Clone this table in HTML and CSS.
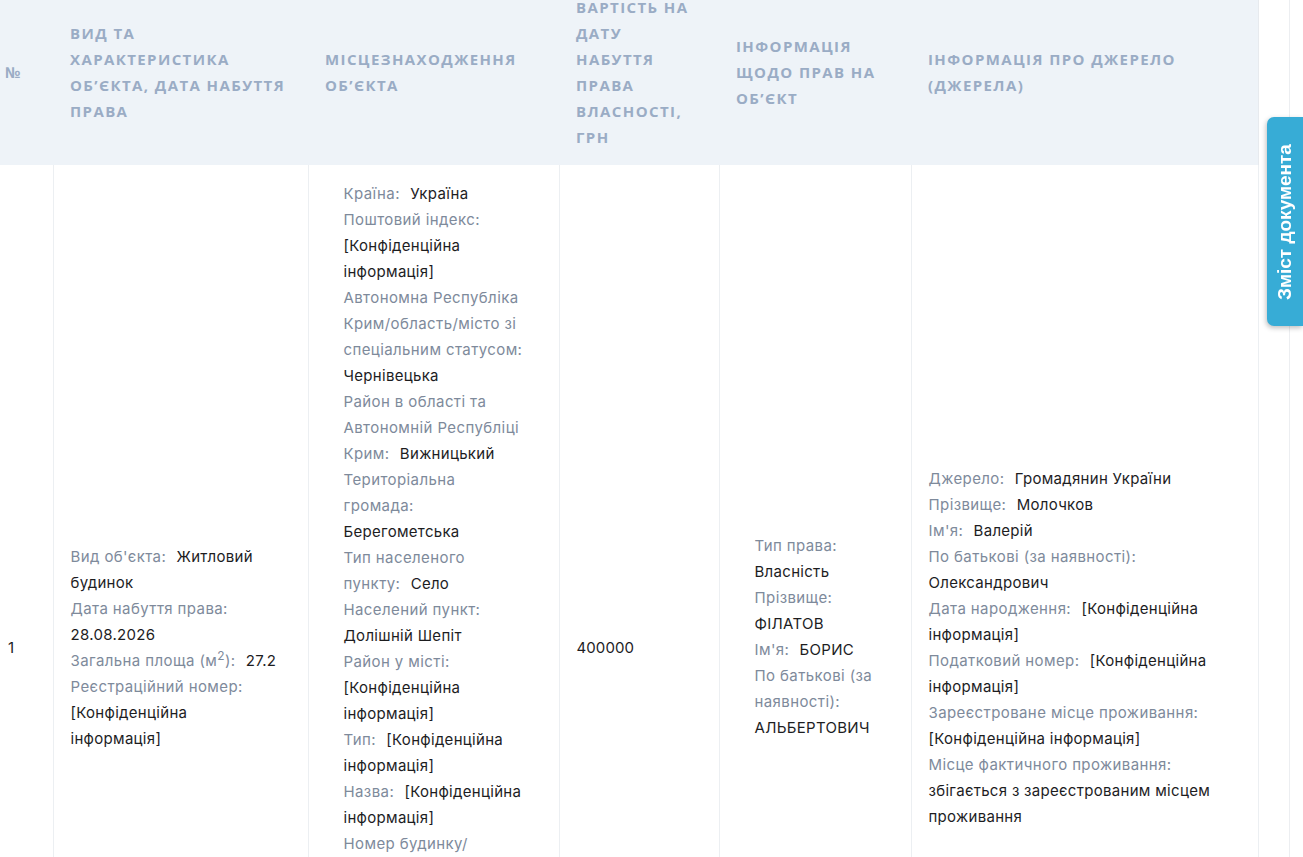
FILE: index.html
```html
<!DOCTYPE html>
<html lang="uk">
<head>
<meta charset="utf-8">
<title>Декларація</title>
<link rel="stylesheet" href="styles.css">
</head>
<body>
<div class="page">
  <div class="main">
    <table class="decl">
      <colgroup>
        <col class="c-num"><col class="c-type"><col class="c-loc"><col class="c-cost"><col class="c-rights"><col class="c-src">
      </colgroup>
      <thead>
        <tr>
          <th class="th-num">№</th>
          <th>Вид та характеристика об’єкта, дата набуття права</th>
          <th>Місцезнаходження об’єкта</th>
          <th>Вартість на дату набуття права власності, грн</th>
          <th>Інформація щодо прав на об’єкт</th>
          <th>Інформація про джерело (джерела)</th>
        </tr>
      </thead>
      <tbody>
        <tr class="row">
          <td class="td-num">1</td>
          <td>
            <div class="item"><span class="lbl">Вид об'єкта:</span> <span class="val">Житловий будинок</span></div>
            <div class="item"><span class="lbl">Дата набуття права:</span> <span class="val">28.08.2026</span></div>
            <div class="item"><span class="lbl">Загальна площа (м<sup>2</sup>):</span> <span class="val">27.2</span></div>
            <div class="item"><span class="lbl">Реєстраційний номер:</span> <span class="val">[Конфіденційна інформація]</span></div>
          </td>
          <td class="td-top">
            <div class="list">
              <div class="item"><span class="lbl">Країна:</span> <span class="val">Україна</span></div>
              <div class="item"><span class="lbl">Поштовий індекс:</span> <span class="val">[Конфіденційна інформація]</span></div>
              <div class="item"><span class="lbl">Автономна Республіка Крим/область/місто зі спеціальним статусом:</span> <span class="val">Чернівецька</span></div>
              <div class="item"><span class="lbl">Район в області та Автономній Республіці Крим:</span> <span class="val">Вижницький</span></div>
              <div class="item"><span class="lbl">Територіальна громада:</span> <span class="val">Берегометська</span></div>
              <div class="item"><span class="lbl">Тип населеного пункту:</span> <span class="val">Село</span></div>
              <div class="item"><span class="lbl">Населений пункт:</span> <span class="val">Долішній Шепіт</span></div>
              <div class="item"><span class="lbl">Район у місті:</span> <span class="val">[Конфіденційна інформація]</span></div>
              <div class="item"><span class="lbl">Тип:</span> <span class="val">[Конфіденційна інформація]</span></div>
              <div class="item"><span class="lbl">Назва:</span> <span class="val">[Конфіденційна інформація]</span></div>
              <div class="item"><span class="lbl">Номер будинку/ корпусу:</span> <span class="val">[Конфіденційна інформація]</span></div>
              <div class="item"><span class="lbl">Номер квартири:</span> <span class="val">[Конфіденційна інформація]</span></div>
            </div>
          </td>
          <td>400000</td>
          <td>
            <div class="list">
              <div class="item"><span class="lbl">Тип права:</span> <span class="val">Власність</span></div>
              <div class="item"><span class="lbl">Прізвище:</span> <span class="val">ФІЛАТОВ</span></div>
              <div class="item"><span class="lbl">Ім'я:</span> <span class="val">БОРИС</span></div>
              <div class="item"><span class="lbl">По батькові (за наявності):</span> <span class="val">АЛЬБЕРТОВИЧ</span></div>
            </div>
          </td>
          <td>
            <div class="item"><span class="lbl">Джерело:</span> <span class="val">Громадянин України</span></div>
            <div class="item"><span class="lbl">Прізвище:</span> <span class="val">Молочков</span></div>
            <div class="item"><span class="lbl">Ім'я:</span> <span class="val">Валерій</span></div>
            <div class="item"><span class="lbl">По батькові (за наявності):</span> <span class="val">Олександрович</span></div>
            <div class="item"><span class="lbl">Дата народження:</span> <span class="val">[Конфіденційна інформація]</span></div>
            <div class="item"><span class="lbl">Податковий номер:</span> <span class="val">[Конфіденційна інформація]</span></div>
            <div class="item"><span class="lbl">Зареєстроване місце проживання:</span> <span class="val">[Конфіденційна інформація]</span></div>
            <div class="item"><span class="lbl">Місце фактичного проживання:</span> <span class="val">збігається з зареєстрованим місцем проживання</span></div>
          </td>
        </tr>
      </tbody>
    </table>
  </div>
  <div class="gutter"></div>
</div>
<button class="toc-tab" type="button"><span class="toc-text">Зміст документа</span></button>
</body>
</html>
```

FILE: styles.css
```css
html, body {
  margin: 0;
  padding: 0;
  background: #ffffff;
  overflow: hidden;
}

body {
  font-family: Inter, "Noto Sans", sans-serif;
  font-size: 15px;
  line-height: 26px;
  color: #1d1d1f;
}

.page {
  display: flex;
  align-items: stretch;
  min-height: 857px;
}

.main {
  width: 1258px;
  flex: none;
  border-right: 1px solid #e7eaee;
}

.gutter {
  width: 30px;
  flex: none;
  border-right: 1px solid #eceef1;
}

.decl {
  width: 1258px;
  table-layout: fixed;
  border-collapse: collapse;
  margin-top: -20px;
}

.c-num { width: 53px; }
.c-type { width: 255px; }
.c-loc { width: 251px; }
.c-cost { width: 160px; }
.c-rights { width: 192px; }
.c-src { width: 347px; }

.decl th {
  background: #eef3f8;
  height: 185px;
  padding: 14px 20px 15px 17px;
  box-sizing: border-box;
  text-align: left;
  vertical-align: middle;
  font-family: "Open Sans", "Noto Sans", sans-serif;
  font-weight: 700;
  font-size: 15px;
  line-height: 26px;
  letter-spacing: 1.4px;
  text-transform: uppercase;
  color: #9aacc5;
}

.decl th.th-num {
  padding-left: 5px;
  padding-right: 0;
  letter-spacing: 0;
}

.decl td {
  padding: 16px 29px 16px 17px;
  vertical-align: middle;
  border-left: 1px solid #eceff2;
  border-right: 1px solid #eceff2;
  letter-spacing: 0.1px;
}

.row {
  height: 966px;
}

.decl td.td-num {
  padding-left: 8px;
  padding-right: 0;
  border-left: none;
}

.decl td.td-top {
  vertical-align: top;
}

.list {
  padding: 0 5px 0 18px;
  margin-bottom: 22px;
}

.item {
  word-spacing: 6px;
}

.lbl {
  color: #7e8a9b;
  letter-spacing: 0.4px;
  word-spacing: normal;
}

.val {
  color: #1d1d1f;
  letter-spacing: 0.3px;
  word-spacing: normal;
}

.lbl sup {
  font-size: 12px;
  line-height: 0;
}

.toc-tab {
  position: fixed;
  right: 0;
  top: 117px;
  width: 36px;
  height: 209px;
  padding: 0;
  border: none;
  border-radius: 7px 0 0 7px;
  background: #37acd6;
  box-shadow: -1px 2px 5px rgba(0, 0, 0, 0.25);
  display: flex;
  align-items: center;
  justify-content: center;
  cursor: pointer;
}

.toc-text {
  display: block;
  transform: rotate(-90deg);
  white-space: nowrap;
  font-family: "Liberation Sans", Arial, sans-serif;
  font-weight: 700;
  font-size: 19px;
  line-height: 22px;
  color: #ffffff;
}
```
